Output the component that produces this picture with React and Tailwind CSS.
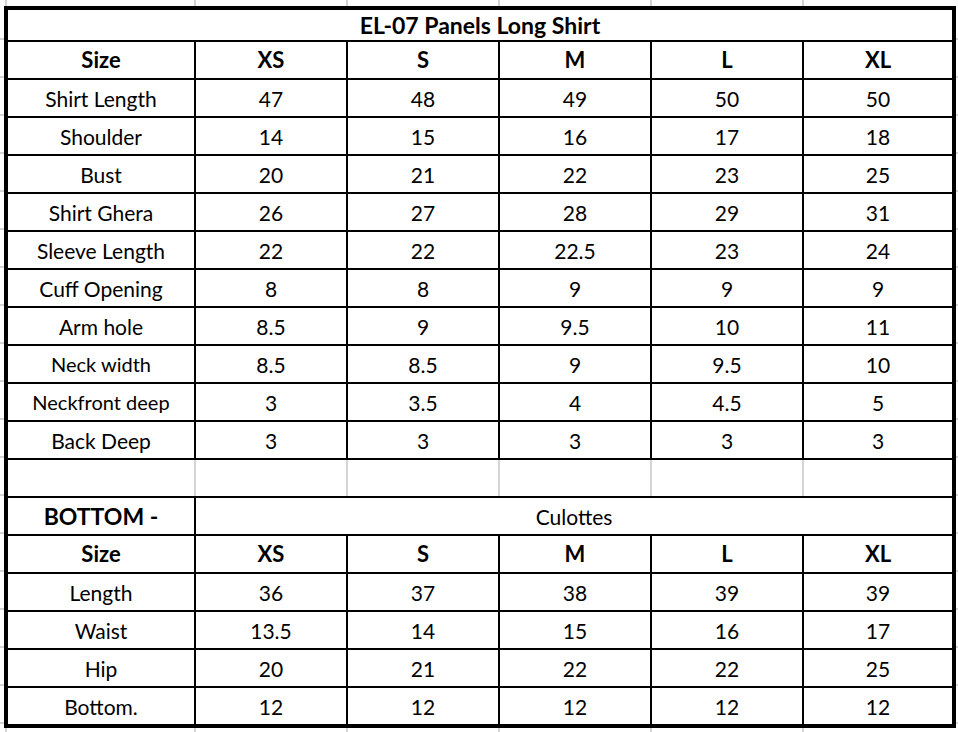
const cols = "grid grid-cols-[186px_152px_152px_152px_152px_150px]";

const shirt = [
  ["Shirt Length", "47", "48", "49", "50", "50"],
  ["Shoulder", "14", "15", "16", "17", "18"],
  ["Bust", "20", "21", "22", "23", "25"],
  ["Shirt Ghera", "26", "27", "28", "29", "31"],
  ["Sleeve Length", "22", "22", "22.5", "23", "24"],
  ["Cuff Opening", "8", "8", "9", "9", "9"],
  ["Arm hole", "8.5", "9", "9.5", "10", "11"],
  ["Neck width", "8.5", "8.5", "9", "9.5", "10"],
  ["Neckfront deep", "3", "3.5", "4", "4.5", "5"],
  ["Back Deep", "3", "3", "3", "3", "3"],
];

const bottom = [
  ["Length", "36", "37", "38", "39", "39"],
  ["Waist", "13.5", "14", "15", "16", "17"],
  ["Hip", "20", "21", "22", "22", "25"],
  ["Bottom.", "12", "12", "12", "12", "12"],
];

const sizes = ["Size", "XS", "S", "M", "L", "XL"];

function Row({ cells, bold, small }) {
  return (
    <div className={`${cols} h-[38px] border-t-2 border-black`}>
      {cells.map((c, i) => (
        <div
          key={i}
          className={`flex items-center justify-center ${i > 0 ? "border-l-2 border-black" : ""} ${bold ? "font-bold text-[22px]" : ""} ${small && i === 0 ? "text-[20px]" : ""}`}
        >
          {c}
        </div>
      ))}
    </div>
  );
}

export default function App() {
  return (
    <div className="w-[958px] h-[732px] bg-white overflow-hidden font-['Lato',sans-serif] text-[21px] text-black leading-none">
      {/* spreadsheet gridlines above */}
      <div className="flex h-[6px] pl-[5px]">
        <div className="w-[189px] border-l-2 border-[#d4d4d4]"></div>
        <div className="w-[152px] border-l-2 border-[#d4d4d4]"></div>
        <div className="w-[152px] border-l-2 border-[#d4d4d4]"></div>
        <div className="w-[152px] border-l-2 border-[#d4d4d4]"></div>
        <div className="w-[152px] border-l-2 border-[#d4d4d4]"></div>
        <div className="w-[152px] border-l-2 border-[#d4d4d4]"></div>
      </div>

      <div className="flex">
        <div className="w-[4px] flex flex-col">
          <div className="h-[34px] border-b-2 border-[#d4d4d4]"></div>
          {Array.from({ length: 18 }).map((_, i) => (
            <div key={i} className="h-[38px] border-b-2 border-[#d4d4d4]"></div>
          ))}
        </div>

        <div className="w-[952px] border-4 border-black">
          <div className="h-[30px] flex items-center justify-center font-bold text-[23px]">
            EL-07 Panels Long Shirt
          </div>
          <Row cells={sizes} bold />
          {shirt.map((r) => (
            <Row key={r[0]} cells={r} small={r[0] === "Neck width" || r[0] === "Neckfront deep"} />
          ))}

          <div className={`${cols} h-[38px] border-t-2 border-black`}>
            <div></div>
            <div className="border-l-2 border-[#d4d4d4]"></div>
            <div className="border-l-2 border-[#d4d4d4]"></div>
            <div className="border-l-2 border-[#d4d4d4]"></div>
            <div className="border-l-2 border-[#d4d4d4]"></div>
            <div className="border-l-2 border-[#d4d4d4]"></div>
          </div>

          <div className={`${cols} h-[38px] border-t-2 border-black`}>
            <div className="flex items-center justify-center font-bold text-[23px]">BOTTOM -</div>
            <div className="col-span-5 border-l-2 border-black flex items-center justify-center">
              Culottes
            </div>
          </div>

          <Row cells={sizes} bold />
          {bottom.map((r) => (
            <Row key={r[0]} cells={r} />
          ))}
        </div>

        <div className="w-[2px] flex flex-col">
          <div className="h-[34px] border-b-2 border-[#d4d4d4]"></div>
          {Array.from({ length: 18 }).map((_, i) => (
            <div key={i} className="h-[38px] border-b-2 border-[#d4d4d4]"></div>
          ))}
        </div>
      </div>

      <div className="flex h-[10px] pl-[5px]">
        <div className="w-[189px] border-l-2 border-[#d4d4d4]"></div>
        <div className="w-[152px] border-l-2 border-[#d4d4d4]"></div>
        <div className="w-[152px] border-l-2 border-[#d4d4d4]"></div>
        <div className="w-[152px] border-l-2 border-[#d4d4d4]"></div>
        <div className="w-[152px] border-l-2 border-[#d4d4d4]"></div>
        <div className="w-[152px] border-l-2 border-[#d4d4d4]"></div>
      </div>
    </div>
  );
}
